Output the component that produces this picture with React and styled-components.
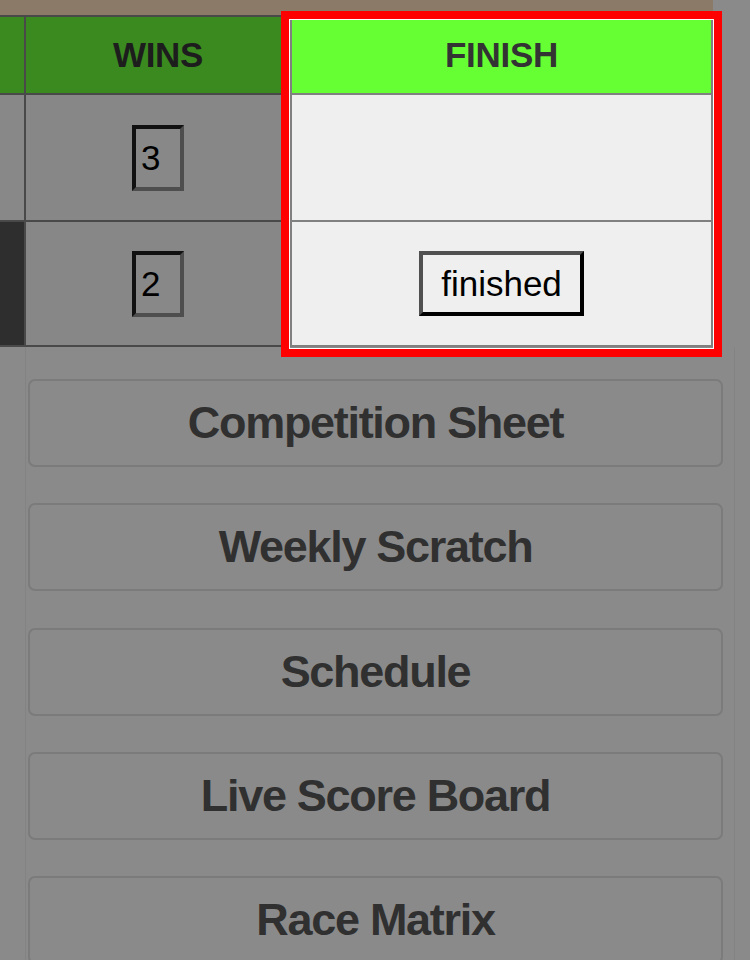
import React from "react";
import styled, { createGlobalStyle } from "styled-components";

const GlobalStyle = createGlobalStyle`
  html, body {
    margin: 0;
    padding: 0;
    background: #8a8a8a;
    overflow: hidden;
  }
  body {
    font-family: "Liberation Sans", Arial, sans-serif;
  }
`;

const Page = styled.div`
  width: 750px;
  height: 960px;
  overflow: hidden;
`;

const TableArea = styled.div`
  position: relative;
  width: 713px;
`;

const TopBar = styled.div`
  height: 15px;
  background: #8b7a67;
`;

const Grid = styled.div`
  display: grid;
  grid-template-columns: 26px 264px 423px;
  grid-template-rows: 78px 127px 125px;
  border-top: 2px solid #494949;
`;

const Cell = styled.div`
  box-sizing: border-box;
  display: flex;
  align-items: center;
  justify-content: center;
  background: ${(p) => p.bg};
  border-bottom: 2px solid ${(p) => (p.lit ? "#808080" : "#494949")};
  border-right: ${(p) => (p.edge ? "2px solid #494949" : "none")};
  ${(p) =>
    p.lit &&
    `
    border-left: 2px solid #808080;
    border-right: 2px solid #808080;
  `}
`;

const HeadText = styled.span`
  font-size: 35px;
  font-weight: 700;
  letter-spacing: -0.3px;
  color: ${(p) => (p.lit ? "#333333" : "#1d1d1d")};
`;

const WinsInput = styled.input`
  box-sizing: border-box;
  width: 52px;
  height: 66px;
  margin: 0;
  padding: 0 0 0 5px;
  border: 4px solid;
  border-color: #111111 #4e4e4e #4e4e4e #111111;
  background: #888888;
  font-family: "Liberation Sans", Arial, sans-serif;
  font-size: 35px;
  color: #000;
  outline: none;
`;

const FinishButton = styled.button`
  box-sizing: border-box;
  height: 65px;
  margin: 0;
  padding: 0 18px;
  border: 4px solid;
  border-color: #505050 #000 #000 #505050;
  background: #efefef;
  font-family: "Liberation Sans", Arial, sans-serif;
  font-size: 35px;
  color: #000;
`;

const Highlight = styled.div`
  position: absolute;
  left: 281px;
  top: 11px;
  width: 441px;
  height: 346px;
  box-sizing: border-box;
  border: 8px solid #ff0000;
  box-shadow: inset 0 0 0 1px #ffffff;
  pointer-events: none;
`;

const Panel = styled.div`
  margin-left: 25px;
  width: 695px;
  min-height: 613px;
  padding: 32px 11px 0 2px;
  border-left: 1px solid #838383;
  border-right: 1px solid #838383;
  display: flex;
  flex-direction: column;
  gap: 36.25px;
`;

const MenuButton = styled.button`
  box-sizing: border-box;
  width: 695px;
  height: 88px;
  flex-shrink: 0;
  margin: 0;
  border: 2px solid #7b7b7b;
  border-radius: 7px;
  background: transparent;
  font-family: "Liberation Sans", Arial, sans-serif;
  font-size: 45px;
  font-weight: 700;
  letter-spacing: -1.3px;
  color: #303030;
`;

const menu = [
  "Competition Sheet",
  "Weekly Scratch",
  "Schedule",
  "Live Score Board",
  "Race Matrix",
];

export default function App() {
  return (
    <Page>
      <GlobalStyle />
      <TableArea>
        <TopBar />
        <Grid>
          <Cell bg="#3a8a20" edge />
          <Cell bg="#3a8a20">
            <HeadText>WINS</HeadText>
          </Cell>
          <Cell bg="#66ff33" lit>
            <HeadText lit>FINISH</HeadText>
          </Cell>

          <Cell bg="#888888" edge />
          <Cell bg="#878787">
            <WinsInput readOnly value="3" />
          </Cell>
          <Cell bg="#efefef" lit />

          <Cell bg="#2e2e2e" edge />
          <Cell bg="#878787">
            <WinsInput readOnly value="2" />
          </Cell>
          <Cell bg="#efefef" lit>
            <FinishButton>finished</FinishButton>
          </Cell>
        </Grid>
        <Highlight />
      </TableArea>
      <Panel>
        {menu.map((label) => (
          <MenuButton key={label}>{label}</MenuButton>
        ))}
      </Panel>
    </Page>
  );
}
